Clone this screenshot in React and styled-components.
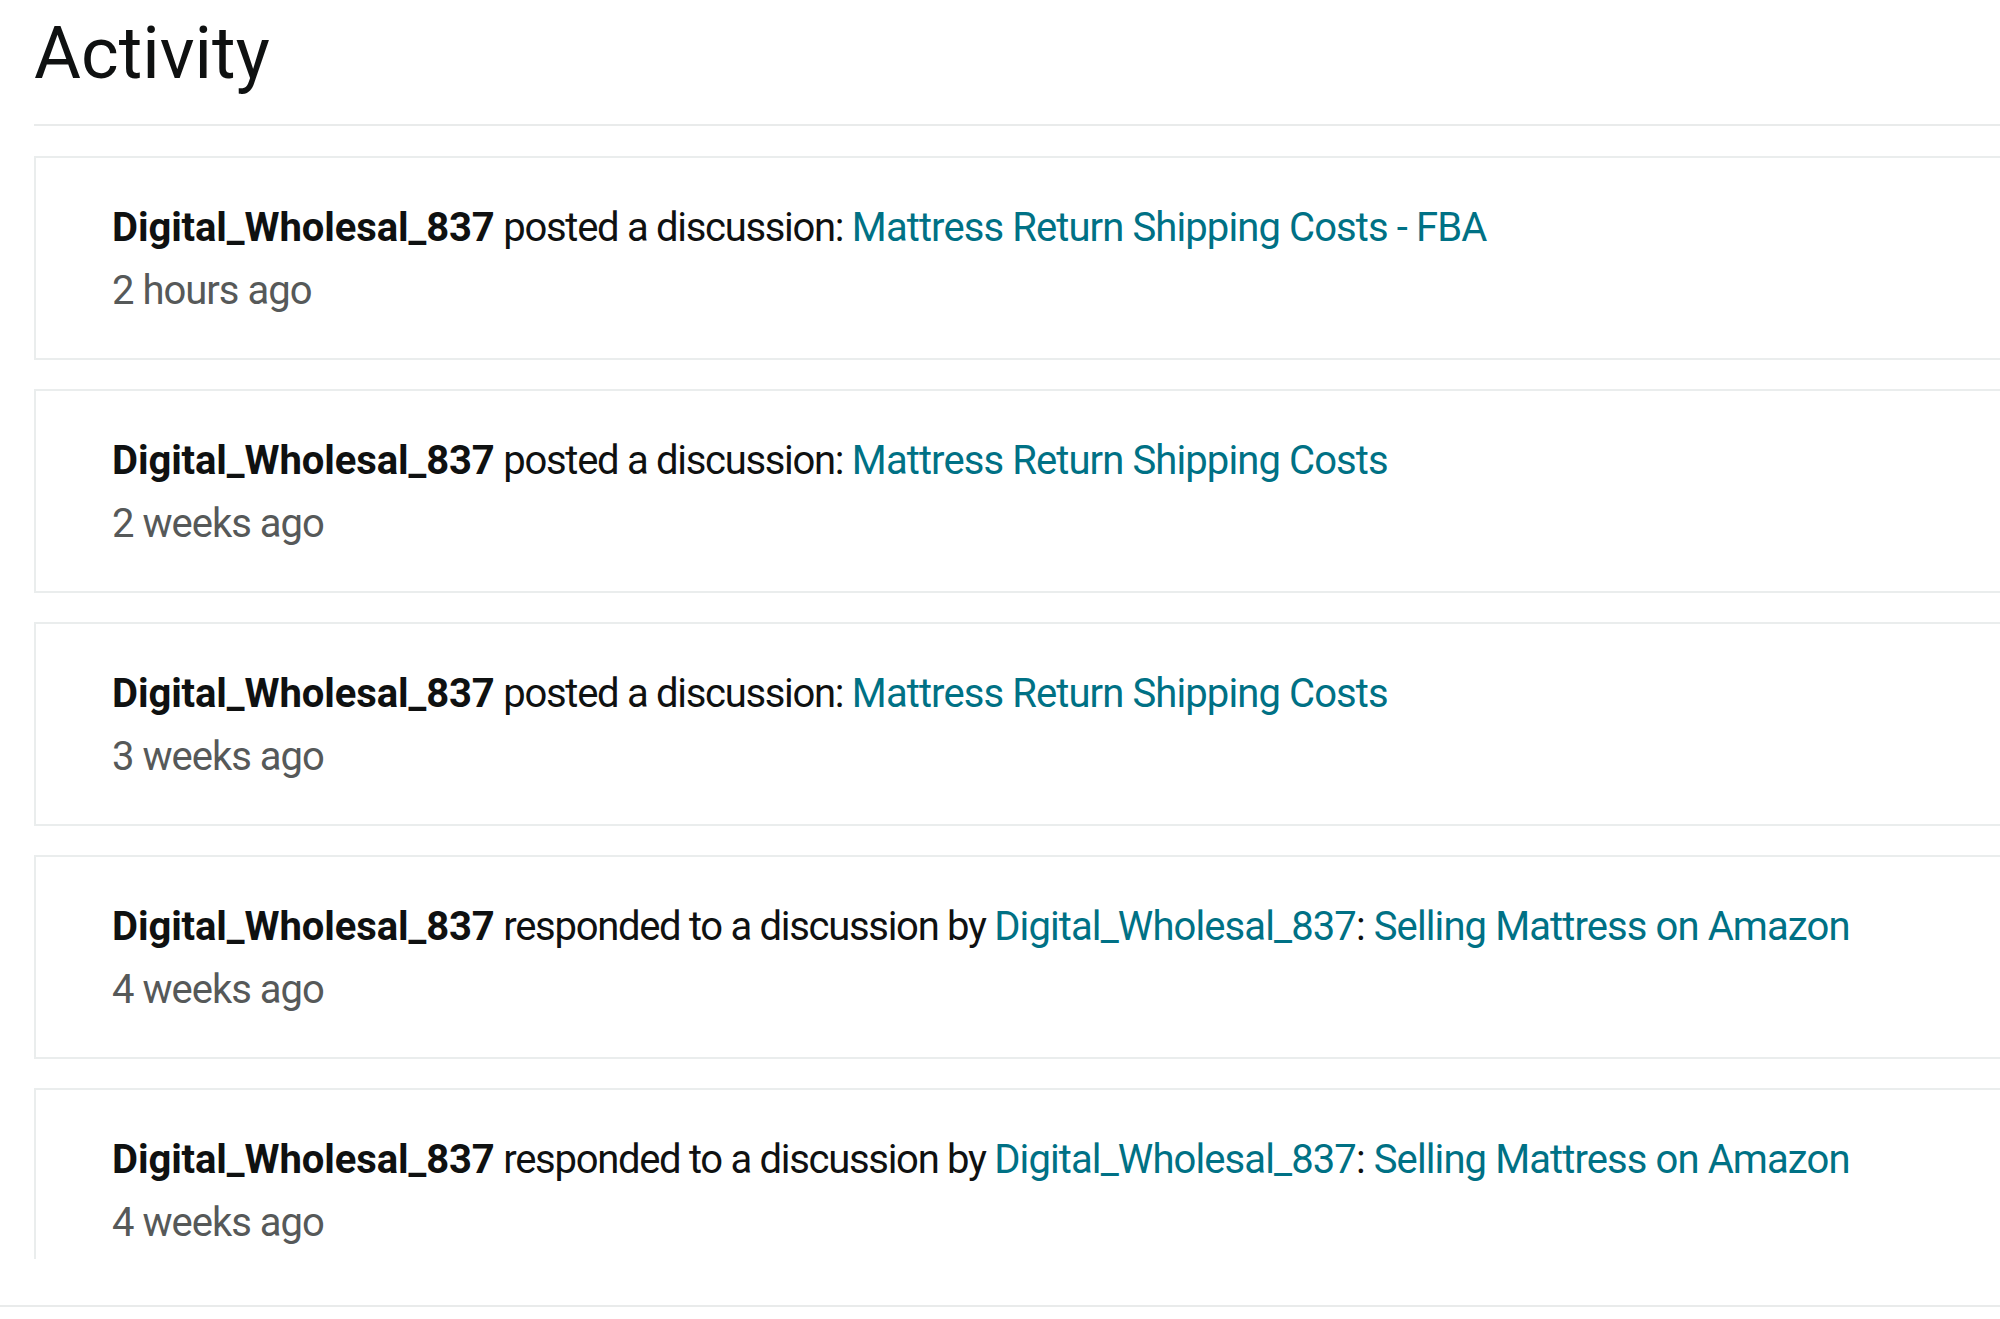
import React from 'react';
import styled, { createGlobalStyle } from 'styled-components';

const GlobalStyle = createGlobalStyle`
  html, body {
    margin: 0;
    padding: 0;
    background: #ffffff;
    overflow: hidden;
  }
  body {
    font-family: Roboto, 'Noto Sans', Arial, sans-serif;
    color: #0f1111;
  }
`;

const Page = styled.div`
  width: 100vw;
  height: 100vh;
  overflow: hidden;
`;

const Section = styled.section`
  padding-left: 34px;
  padding-top: 11px;
`;

const Title = styled.h1`
  margin: 0;
  font-family: Roboto, 'Noto Sans', sans-serif;
  font-size: 72px;
  font-weight: 400;
  line-height: 86px;
  color: #0f1111;
`;

const Divider = styled.div`
  height: 2px;
  background: #e9ebeb;
  margin-top: 27px;
`;

const Feed = styled.div`
  margin-top: 30px;
  height: 1103px;
  overflow: hidden;
  display: flex;
  flex-direction: column;
  gap: 29px;
`;

const Card = styled.div`
  width: 2100px;
  flex-shrink: 0;
  box-sizing: border-box;
  border: 2px solid #eaeded;
  padding: 40px 76px 37px;
`;

const Line = styled.div`
  font-size: 40px;
  line-height: 60px;
  letter-spacing: -0.9px;
  white-space: nowrap;
`;

const Author = styled.span`
  font-weight: 700;
  letter-spacing: -0.1px;
  color: #0f1111;
`;

const Action = styled.span`
  letter-spacing: -1.3px;
`;

const Link = styled.a`
  color: #007185;
  text-decoration: none;
  cursor: pointer;
`;

const Time = styled.div`
  margin-top: 3px;
  font-size: 40px;
  line-height: 60px;
  letter-spacing: -1px;
  color: #565959;
`;

const BottomRule = styled.div`
  height: 2px;
  background: #e9ebeb;
  margin-top: 46px;
`;

const items = [
  { kind: 'posted', title: 'Mattress Return Shipping Costs - FBA', time: '2 hours ago' },
  { kind: 'posted', title: 'Mattress Return Shipping Costs', time: '2 weeks ago' },
  { kind: 'posted', title: 'Mattress Return Shipping Costs', time: '3 weeks ago' },
  { kind: 'responded', by: 'Digital_Wholesal_837', title: 'Selling Mattress on Amazon', time: '4 weeks ago' },
  { kind: 'responded', by: 'Digital_Wholesal_837', title: 'Selling Mattress on Amazon', time: '4 weeks ago' },
];

export default function App() {
  return (
    <Page>
      <GlobalStyle />
      <Section>
        <Title>Activity</Title>
        <Divider />
        <Feed>
          {items.map((it, i) => (
            <Card key={i}>
              <Line>
                <Author>Digital_Wholesal_837</Author>
                {it.kind === 'posted' ? (
                  <><Action> posted a discussion: </Action><Link>{it.title}</Link></>
                ) : (
                  <><Action> responded to a discussion by </Action><Link>{it.by}</Link>: <Link>{it.title}</Link></>
                )}
              </Line>
              <Time>{it.time}</Time>
            </Card>
          ))}
        </Feed>
      </Section>
      <BottomRule />
    </Page>
  );
}
